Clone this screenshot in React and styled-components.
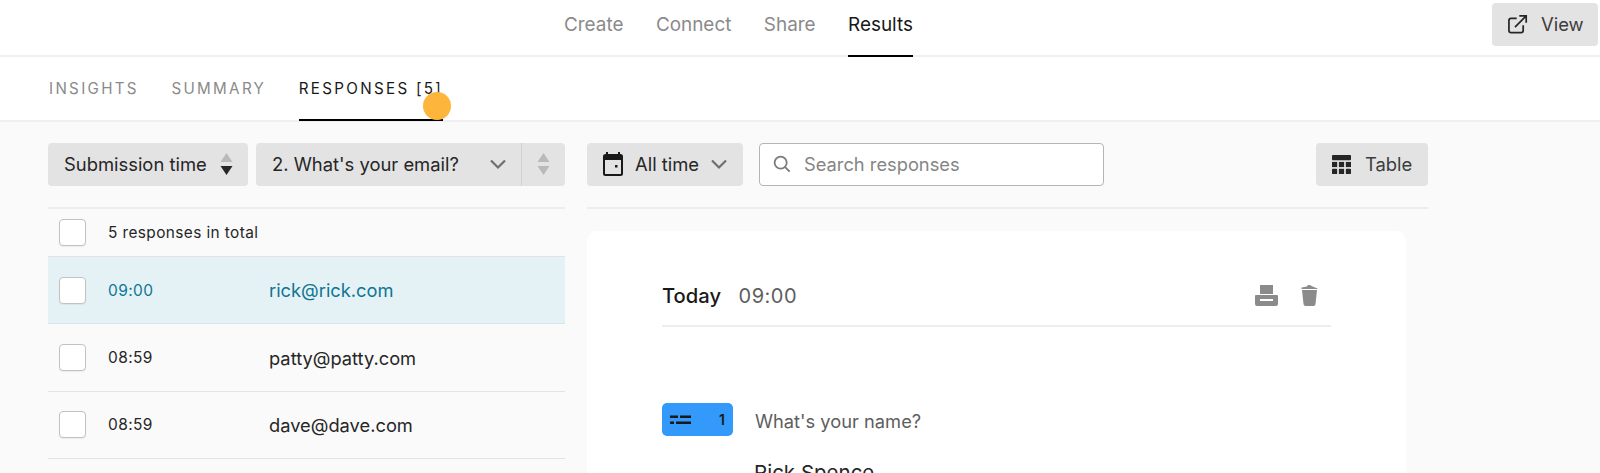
import React from "react";
import styled, { createGlobalStyle } from "styled-components";

const GlobalStyle = createGlobalStyle`
  html, body {
    margin: 0;
    padding: 0;
    height: 473px;
    overflow: hidden;
    background: #fafafa;
    font-family: Inter, "Liberation Sans", sans-serif;
    color: #262627;
  }
  * { box-sizing: border-box; }
  svg { flex: none; }
`;

const Page = styled.div`
  width: 1600px;
  height: 473px;
  overflow: hidden;
  position: relative;
`;

const TopBar = styled.header`
  height: 57px;
  background: #fff;
  border-bottom: 2px solid #f0f0f0;
  display: flex;
  justify-content: space-between;
  padding: 0 2px 0 564px;
`;

const TopNav = styled.nav`
  display: flex;
  gap: 32.5px;
  height: 57px;
`;

const TopLink = styled.a`
  height: 57px;
  padding-top: 14px;
  font-size: 18.9px;
  line-height: 21px;
  color: ${(p) => (p.$active ? "#191919" : "#8a8a8a")};
  border-bottom: 2px solid ${(p) => (p.$active ? "#000" : "transparent")};
`;

const GreyButton = styled.button`
  display: flex;
  align-items: center;
  border: 0;
  border-radius: 4px;
  background: #e3e3e3;
  height: 43px;
  padding: 0 0 1px;
  font: inherit;
  font-size: 18.4px;
  color: #262627;
  flex: none;
`;

const ViewButton = styled(GreyButton)`
  margin-top: 3px;
  width: 106px;
  padding-left: 16px;
  gap: 13px;
  color: #3d3d3d;
`;

const SubBar = styled.div`
  height: 65px;
  background: #fff;
  border-bottom: 2px solid #f0f0f0;
  padding-left: 49px;
  display: flex;
  gap: 33.5px;
`;

const SubTab = styled.a`
  height: 64px;
  padding-top: 22px;
  font-size: 15.2px;
  line-height: 20px;
  letter-spacing: 2.3px;
  color: ${(p) => (p.$active ? "#191919" : "#8a8a8a")};
  border-bottom: 2px solid ${(p) => (p.$active ? "#000" : "transparent")};
  margin-right: -1px;
`;

const Dot = styled.span`
  position: absolute;
  left: 423px;
  top: 92px;
  width: 28px;
  height: 28px;
  border-radius: 50%;
  background: #fdb53b;
`;

const Body = styled.div`
  display: flex;
  padding: 21px 0 0 48px;
  gap: 22px;
`;

const LeftColumn = styled.section`
  width: 517px;
  flex: none;
`;

const RightColumn = styled.section`
  width: 841px;
  flex: none;
`;

const Toolbar = styled.div`
  display: flex;
  gap: ${(p) => p.$gap || 8}px;
  height: 66px;
  padding-bottom: 23px;
  border-bottom: 2px solid #ededed;
`;

const SortButton = styled(GreyButton)`
  width: 200px;
  padding: 0 15px 1px 16px;
  justify-content: flex-start;
`;

const SelectButton = styled(GreyButton)`
  width: 309px;
  padding-left: 16px;
`;

const SelectLabel = styled.span`
  flex: 1;
  text-align: left;
`;

const SelectChevron = styled.span`
  display: flex;
  width: 32px;
  justify-content: flex-start;
`;

const SortCell = styled.span`
  width: 44px;
  height: 43px;
  display: flex;
  align-items: center;
  justify-content: center;
  border-left: 1px solid #d2d2d2;
`;

const DateButton = styled(GreyButton)`
  width: 156px;
  padding-left: 16px;
  gap: 12px;
  margin-right: 8px;
  svg:last-child {
    margin-left: -1px;
  }
`;

const SearchBox = styled.div`
  width: 345px;
  height: 43px;
  border: 1px solid #b5b5b5;
  border-radius: 4px;
  background: #fff;
  display: flex;
  align-items: center;
  padding: 0 0 1px 13px;
  gap: 13px;
  font-size: 18.3px;
  color: #858585;
`;

const TableButton = styled(GreyButton)`
  width: 112px;
  margin-left: auto;
  padding-left: 16px;
  gap: 14px;
  color: #3d3d3d;
`;

const Row = styled.div`
  display: flex;
  align-items: center;
  height: ${(p) => p.$height || 67.4}px;
  padding-left: 11px;
  background: ${(p) => (p.$active ? "#e4f2f6" : "transparent")};
  color: ${(p) => (p.$active ? "#0e7593" : "#262627")};
  border-bottom: 1px solid ${(p) => (p.$active ? "#d6e5ea" : "#e3e3e3")};
`;

const Check = styled.span`
  width: 27px;
  height: 27px;
  flex: none;
  background: #fff;
  border: 1px solid #c2c2c2;
  border-radius: 4px;
  box-shadow: 0 1px 1px rgba(0, 0, 0, 0.06);
  margin-right: 22px;
`;

const TotalText = styled.span`
  font-size: 15.4px;
  letter-spacing: 0.4px;
`;

const Time = styled.span`
  width: 161px;
  font-size: 15.5px;
  letter-spacing: 0.4px;
`;

const Email = styled.span`
  font-size: 18.3px;
`;

const Card = styled.article`
  margin-top: 22px;
  width: 819px;
  height: 300px;
  background: #fff;
  border-radius: 10px;
  padding: 0 75px 0 75px;
`;

const CardHead = styled.div`
  height: 96px;
  display: flex;
  align-items: center;
  padding-top: 35px;
  border-bottom: 2px solid #eeeeee;
`;

const DayLabel = styled.span`
  font-size: 20.2px;
  font-weight: 500;
  color: #191919;
  margin-right: 17.5px;
`;

const DayTime = styled.span`
  font-size: 20px;
  color: #5e5e5e;
  letter-spacing: 0.5px;
`;

const CardIcons = styled.div`
  margin-left: auto;
  display: flex;
  align-items: center;
  gap: 23px;
  padding-right: 13px;
`;

const Question = styled.div`
  display: flex;
  align-items: center;
  margin-top: 76px;
  gap: 22px;
`;

const Badge = styled.span`
  width: 71px;
  height: 33px;
  border-radius: 5px;
  background: #3399fb;
  display: flex;
  align-items: center;
  justify-content: space-between;
  padding: 0 8px;
  font-size: 14px;
  font-weight: 600;
  color: #191919;
`;

const QuestionText = styled.span`
  font-size: 18.3px;
  color: #5e5e5e;
  padding-top: 3px;
`;

const Answer = styled.div`
  margin: 24px 0 0 92px;
  font-size: 20.5px;
  color: #262627;
`;

const SortArrows = ({ dark }) => (
  <svg width="13" height="24" viewBox="0 0 13 24">
    <path d="M6.5 1 L12.500 10 H0.500 Z" fill="#b9b9b9" />
    <path d="M6.5 23 L0.500 14 H12.500 Z" fill={dark ? "#262627" : "#b9b9b9"} />
  </svg>
);

const Chevron = () => (
  <svg width="18" height="12" viewBox="0 0 18 12" fill="none">
    <path d="M2 2.5 L9 9.5 L16 2.5" stroke="#6f6f6f" strokeWidth="2.2" />
  </svg>
);

const CalendarIcon = () => (
  <svg width="20" height="24" viewBox="0 0 20 24" fill="none">
    <path d="M4 0 V3 M16 0 V3" stroke="#191919" strokeWidth="2" />
    <rect x="1" y="3" width="18" height="20" rx="1.5" stroke="#191919" strokeWidth="2" />
    <rect x="1" y="3" width="18" height="5" fill="#191919" />
    <rect x="12" y="13" width="2.5" height="2.5" fill="#191919" />
  </svg>
);

const SearchIcon = () => (
  <svg width="18" height="18" viewBox="0 0 20 20" fill="none">
    <circle cx="8.5" cy="8.5" r="6.7" stroke="#7b7b7b" strokeWidth="2" />
    <path d="M13.5 13.5 L18.5 18.5" stroke="#7b7b7b" strokeWidth="2" />
  </svg>
);

const TableIcon = () => (
  <svg width="19" height="19" viewBox="0 0 22 22" fill="#262627">
    <rect x="0" y="0" width="22" height="6" rx="1" />
    <rect x="0" y="8" width="6" height="6" />
    <rect x="8" y="8" width="6" height="6" />
    <rect x="16" y="8" width="6" height="6" />
    <rect x="0" y="16" width="6" height="6" rx="1" />
    <rect x="8" y="16" width="6" height="6" />
    <rect x="16" y="16" width="6" height="6" rx="1" />
  </svg>
);

const ExternalIcon = () => (
  <svg width="20" height="19" viewBox="0 0 23 22" fill="none" stroke="#262627" strokeWidth="2">
    <path d="M10 4 H3.5 A2.5 2.5 0 0 0 1 6.500 V18 A2.5 2.5 0 0 0 3.500 20.500 H15 A2.500 2.500 0 0 0 17.500 18 V12" />
    <path d="M8 14 L21 1 M13 1 H21 V9" />
  </svg>
);

const PrintIcon = () => (
  <svg width="23" height="21" viewBox="0 0 23 21">
    <rect x="5" y="0" width="13" height="9" fill="#8b8b8b" />
    <path fillRule="evenodd" d="M1 10 H22 Q23 10 23 11 V19 Q23 21 21 21 H2 Q0 21 0 19 V11 Q0 10 1 10 Z M5 14 V16 H18 V14 Z" fill="#8b8b8b" />
  </svg>
);

const TrashIcon = () => (
  <svg width="17" height="21" viewBox="0 0 17 21">
    <path d="M1 5 H16 L14.500 19 Q14.300 21 12.500 21 H4.500 Q2.700 21 2.500 19 Z" fill="#8b8b8b" />
    <path d="M0.500 2.400 L6 1.400 Q6 0 8 0 Q10 0 10.500 1 L16.500 3.500 V4 H0.500 Z" fill="#8b8b8b" />
  </svg>
);

const ShortTextIcon = () => (
  <svg width="21" height="10" viewBox="0 0 21 10" fill="#191919">
    <rect x="0" y="0.500" width="8" height="2.500" />
    <rect x="10" y="0.500" width="11" height="2.500" />
    <rect x="0" y="6.500" width="4" height="2.500" />
    <rect x="6" y="6.500" width="15" height="2.500" />
  </svg>
);

const responses = [
  { time: "09:00", email: "rick@rick.com", active: true },
  { time: "08:59", email: "patty@patty.com" },
  { time: "08:59", email: "dave@dave.com" },
];

export default function App() {
  return (
    <Page>
      <GlobalStyle />
      <TopBar>
        <TopNav>
          <TopLink>Create</TopLink>
          <TopLink>Connect</TopLink>
          <TopLink>Share</TopLink>
          <TopLink $active>Results</TopLink>
        </TopNav>
        <ViewButton>
          <ExternalIcon />
          View
        </ViewButton>
      </TopBar>
      <SubBar>
        <SubTab>INSIGHTS</SubTab>
        <SubTab>SUMMARY</SubTab>
        <SubTab $active>RESPONSES [5]</SubTab>
      </SubBar>
      <Dot />
      <Body>
        <LeftColumn>
          <Toolbar>
            <SortButton>
              <SelectLabel>Submission time</SelectLabel>
              <SortArrows dark />
            </SortButton>
            <SelectButton>
              <SelectLabel>2. What's your email?</SelectLabel>
              <SelectChevron>
                <Chevron />
              </SelectChevron>
              <SortCell>
                <SortArrows />
              </SortCell>
            </SelectButton>
          </Toolbar>
          <Row $height={48}>
            <Check />
            <TotalText>5 responses in total</TotalText>
          </Row>
          {responses.map((r, i) => (
            <Row key={i} $active={r.active}>
              <Check />
              <Time>{r.time}</Time>
              <Email>{r.email}</Email>
            </Row>
          ))}
        </LeftColumn>
        <RightColumn>
          <Toolbar $gap={0}>
            <DateButton>
              <CalendarIcon />
              All time
              <Chevron />
            </DateButton>
            <SearchBox>
              <SearchIcon />
              Search responses
            </SearchBox>
            <TableButton>
              <TableIcon />
              Table
            </TableButton>
          </Toolbar>
          <Card>
            <CardHead>
              <DayLabel>Today</DayLabel>
              <DayTime>09:00</DayTime>
              <CardIcons>
                <PrintIcon />
                <TrashIcon />
              </CardIcons>
            </CardHead>
            <Question>
              <Badge>
                <ShortTextIcon />1
              </Badge>
              <QuestionText>What's your name?</QuestionText>
            </Question>
            <Answer>Rick Spence</Answer>
          </Card>
        </RightColumn>
      </Body>
    </Page>
  );
}
